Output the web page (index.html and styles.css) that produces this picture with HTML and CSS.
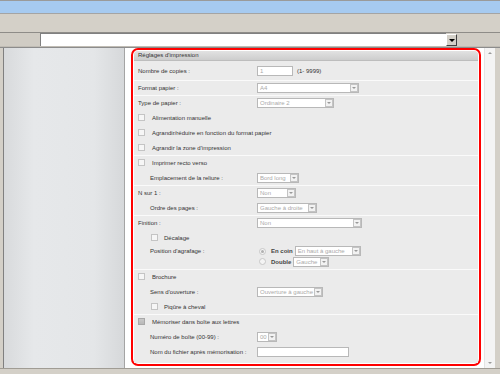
FILE: index.html
```html
<!DOCTYPE html>
<html lang="fr">

<head>
    <meta charset="UTF-8">
    <meta name="viewport" content="width=device-width, initial-scale=1.0">
    <title>Réglages d'impression</title>
    <link rel="stylesheet" href="styles.css">
</head>

<body>
    <div class="window">
        <div class="titlebar"></div>
        <div class="toolbar"></div>
        <div class="addressbar">
            <div class="address"></div>
            <div class="drop"><span class="tri"></span></div>
        </div>

        <div class="main">
            <div class="sidebar"></div>
            <div class="content">
                <div class="frame">
                    <div class="panel">
                        <div class="panel-head">Réglages d'impression</div>

                        <div class="group first">
                            <div class="row">
                                <span class="label">Nombre de copies :</span>
                                <span class="input w34">1</span>
                                <span class="hint">(1- 9999)</span>
                            </div>
                        </div>

                        <div class="group">
                            <div class="row">
                                <span class="label">Format papier :</span>
                                <span class="select w100"><span class="val">A4</span><span class="arrow"></span></span>
                            </div>
                        </div>

                        <div class="group">
                            <div class="row">
                                <span class="label">Type de papier :</span>
                                <span class="select w75"><span class="val">Ordinaire 2</span><span class="arrow"></span></span>
                            </div>
                            <div class="row">
                                <span class="check"></span>Alimentation manuelle
                            </div>
                            <div class="row">
                                <span class="check"></span>Agrandir/réduire en fonction du format papier
                            </div>
                            <div class="row">
                                <span class="check"></span>Agrandir la zone d'impression
                            </div>
                        </div>

                        <div class="group">
                            <div class="row">
                                <span class="check"></span>Imprimer recto verso
                            </div>
                            <div class="row sub">
                                <span class="label">Emplacement de la reliure :</span>
                                <span class="select w40"><span class="val">Bord long</span><span class="arrow"></span></span>
                            </div>
                        </div>

                        <div class="group">
                            <div class="row">
                                <span class="label">N sur 1 :</span>
                                <span class="select w37"><span class="val">Non</span><span class="arrow"></span></span>
                            </div>
                            <div class="row sub">
                                <span class="label">Ordre des pages :</span>
                                <span class="select w58"><span class="val">Gauche à droite</span><span class="arrow"></span></span>
                            </div>
                        </div>

                        <div class="group">
                            <div class="row">
                                <span class="label">Finition :</span>
                                <span class="select w103"><span class="val">Non</span><span class="arrow"></span></span>
                            </div>
                            <div class="row sub-check">
                                <span class="check"></span>Décalage
                            </div>
                            <div class="row sub radio-top">
                                <span class="label">Position d'agrafage :</span>
                                <span class="radio on"></span><span class="opt">En coin</span>
                                <span class="select w63"><span class="val">En haut à gauche</span><span class="arrow"></span></span>
                            </div>
                            <div class="row sub radio-bottom">
                                <span class="label"></span>
                                <span class="radio"></span><span class="opt">Double</span>
                                <span class="select w35"><span class="val">Gauche</span><span class="arrow"></span></span>
                            </div>
                        </div>

                        <div class="group">
                            <div class="row">
                                <span class="check"></span>Brochure
                            </div>
                            <div class="row sub">
                                <span class="label">Sens d'ouverture :</span>
                                <span class="select w63"><span class="val">Ouverture à gauche</span><span class="arrow"></span></span>
                            </div>
                            <div class="row sub-check">
                                <span class="check"></span>Piqûre à cheval
                            </div>
                        </div>

                        <div class="group last">
                            <div class="row">
                                <span class="check dark"></span>Mémoriser dans boîte aux lettres
                            </div>
                            <div class="row sub">
                                <span class="label">Numéro de boîte (00-99) :</span>
                                <span class="select w18"><span class="val">00</span><span class="arrow"></span></span>
                            </div>
                            <div class="row sub">
                                <span class="label">Nom du fichier après mémorisation :</span>
                                <span class="input w90"></span>
                            </div>
                        </div>
                    </div>
                </div>
            </div>
            <div class="scrollbar">
                <span class="up"></span>
                <span class="down"></span>
            </div>
        </div>
        <div class="statusbar"></div>
    </div>
</body>

</html>
```

FILE: styles.css
```css
body {
    margin: 0;
    padding: 0;
    background: #d4d0c8;
    font-family: "Liberation Sans", Arial, sans-serif;
    font-size: 6px;
    color: #333;
}

.window {
    width: 500px;
    height: 374px;
    overflow: hidden;
    display: flex;
    flex-direction: column;
    box-sizing: border-box;
    border-top: 1px solid #9a9a9a;
}

.titlebar {
    height: 12px;
    background: #a6caf0;
    border-bottom: 1px solid #a4a4a4;
}

.toolbar {
    height: 18px;
    background: #d4d0c8;
    border-bottom: 1px solid #8e8c88;
}

.addressbar {
    height: 13px;
    display: flex;
    padding-left: 40px;
    background: #d0ccc4;
    border-bottom: 1px solid #c0bcb4;
}

.address {
    width: 405px;
    background: #fff;
    border-left: 1px solid #808080;
    border-top: 1px solid #808080;
}

.drop {
    width: 9px;
    height: 10px;
    margin-top: 1px;
    background: #d4d0c8;
    border: 1px solid;
    border-color: #fff #404040 #404040 #fff;
    display: flex;
    align-items: center;
    justify-content: center;
}

.tri {
    border-left: 3px solid transparent;
    border-right: 3px solid transparent;
    border-top: 3px solid #000;
}

.main {
    flex: 1;
    display: flex;
    border-top: 1px solid #8c8c8c;
    padding-left: 3px;
}

.sidebar {
    width: 120px;
    border-left: 1px solid #808080;
    border-right: 1px solid #a4a4a4;
    background: linear-gradient(to right, #d8dadc, #e6e8ea 25%, #e4e6e8 75%, #d6d8da);
}

.content {
    width: 353px;
    background: #fff;
    padding-left: 6px;
}

.frame {
    width: 350px;
    height: 318px;
    box-sizing: border-box;
    border: 2px solid #f00;
    border-radius: 7px;
    padding: 1px;
    background: #fff;
}

.panel {
    height: 100%;
    background: #ebebeb;
    border-radius: 4px 4px 0 0;
}

.panel-head {
    height: 9px;
    line-height: 9px;
    padding-left: 4px;
    background: linear-gradient(#e2e2e2, #cdcdcd);
    border-bottom: 1px solid #bdbdbd;
    border-radius: 4px 4px 0 0;
}

.group {
    border-bottom: 1px solid #fafafa;
    margin-bottom: -1px;
}

.group.first {
    padding: 2px 0;
}

.group.last {
    border-bottom: none;
}

.row {
    height: 15px;
    display: flex;
    align-items: center;
    padding-left: 4px;
    white-space: nowrap;
}

.row.radio-top {
    height: 12px;
}

.row.radio-bottom {
    height: 9px;
    margin-bottom: 3px;
}

.label {
    flex: 0 0 119px;
    box-sizing: border-box;
}

.sub .label {
    padding-left: 12px;
}

.sub-check {
    padding-left: 17px;
}

.check {
    width: 5px;
    height: 5px;
    margin-right: 7px;
    border: 1px solid #c4c4c4;
    background: #f6f6f6;
}

.sub-check .check {
    margin-right: 6px;
}

.check.dark {
    background: linear-gradient(#c8c8c8, #b8b8b8);
    border-color: #a8a8a8;
}

.input {
    height: 8px;
    line-height: 8px;
    border: 1px solid #b8b8b8;
    background: #fff;
    color: #aaa;
    padding-left: 2px;
}

.hint {
    margin-left: 4px;
}

.select {
    height: 8px;
    display: flex;
    align-items: center;
    border: 1px solid #b8b8b8;
    background: #fff;
    color: #aaa;
}

.select .val {
    flex: 1;
    padding-left: 2px;
    line-height: 8px;
}

.arrow {
    flex: none;
    width: 6px;
    height: 6px;
    border: 1px solid #c4c4c4;
    background: #f2f2f2;
    display: flex;
    align-items: center;
    justify-content: center;
}

.arrow::after {
    content: "";
    border-left: 2px solid transparent;
    border-right: 2px solid transparent;
    border-top: 2px solid #999;
}

.radio {
    width: 5px;
    height: 5px;
    margin-left: 2px;
    border: 1px solid #c8c8c8;
    border-radius: 50%;
    background: #f4f4f4;
    display: flex;
    align-items: center;
    justify-content: center;
}

.radio.on::after {
    content: "";
    width: 3px;
    height: 3px;
    border-radius: 50%;
    background: #b0b0b0;
}

.opt {
    font-weight: bold;
    color: #444;
    margin: 0 2px 0 5px;
}

.w18 { width: 18px; }
.w34 { width: 32px; }
.w35 { width: 34px; }
.w37 { width: 37px; }
.w40 { width: 40px; }
.w58 { width: 58px; }
.w63 { width: 64px; }
.w75 { width: 75px; }
.w90 { width: 88px; }
.w100 { width: 100px; }
.w103 { width: 103px; }

.scrollbar {
    width: 11px;
    background: #f4f4f4;
    border-left: 1px solid #e4e4e4;
    display: flex;
    flex-direction: column;
    justify-content: space-between;
    align-items: center;
    padding: 4px 0;
    box-sizing: border-box;
}

.up,
.down {
    border-left: 2px solid transparent;
    border-right: 2px solid transparent;
}

.up {
    border-bottom: 2px solid #999;
}

.down {
    border-top: 2px solid #999;
}

.statusbar {
    height: 5px;
    border-top: 1px solid #a09c94;
    background: #d4d0c8;
}
```
